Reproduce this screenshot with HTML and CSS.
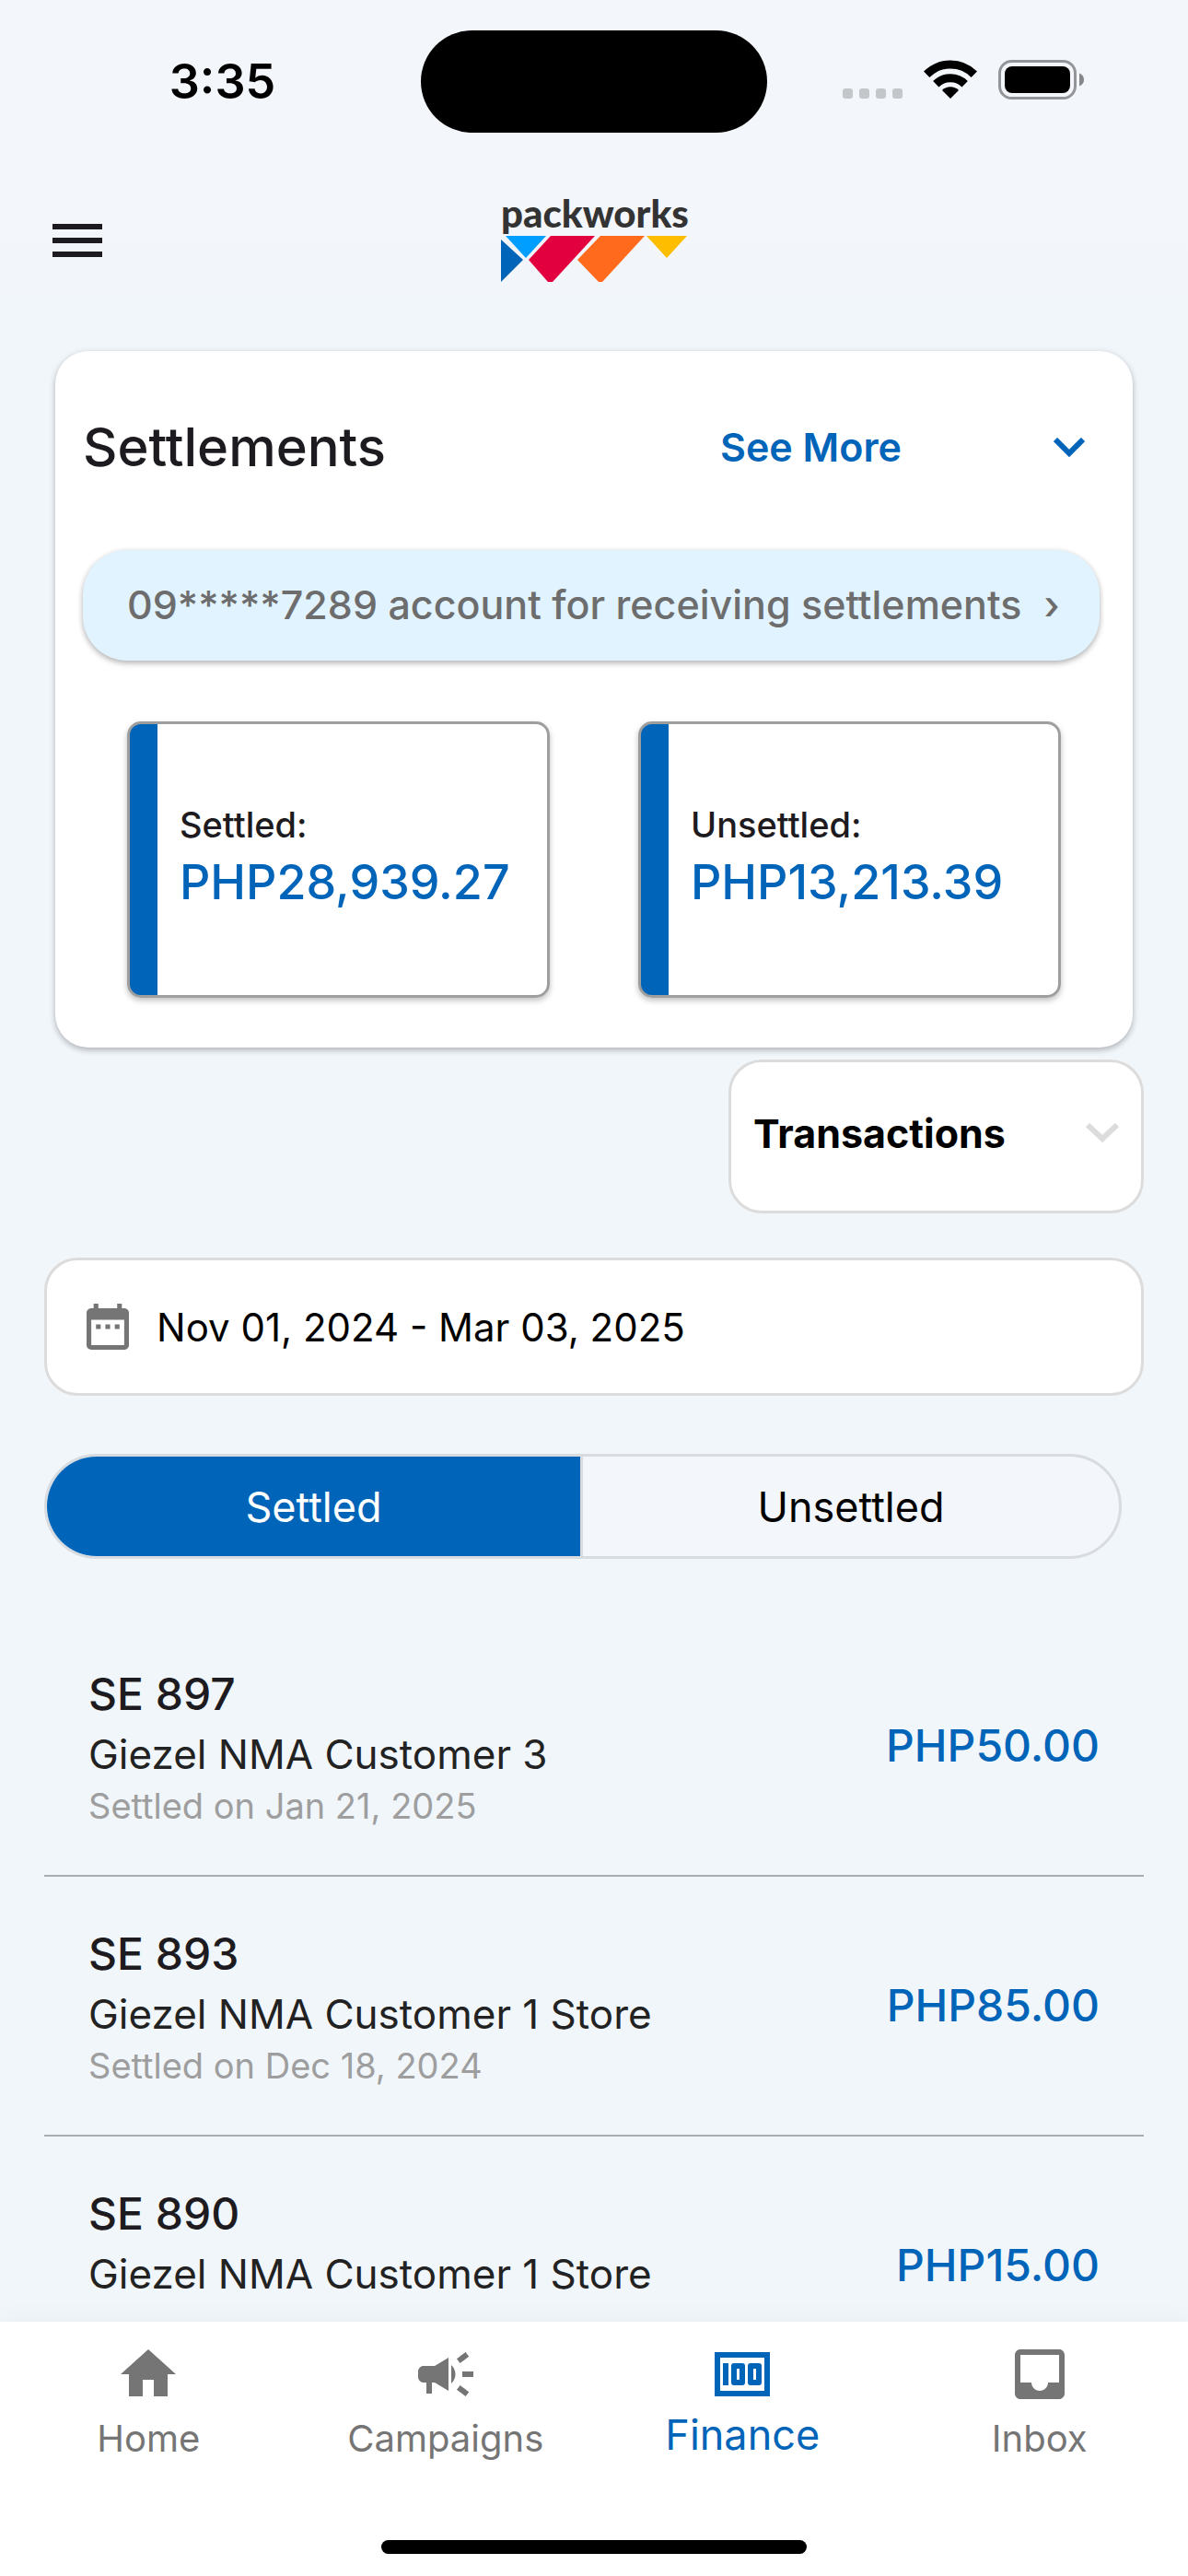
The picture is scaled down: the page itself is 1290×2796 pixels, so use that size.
FILE: index.html
```html
<!DOCTYPE html>
<html lang="en">
<head>
<meta charset="utf-8">
<meta name="viewport" content="width=device-width, initial-scale=1">
<title>Packworks – Finance</title>
<link rel="stylesheet" href="styles.css">
</head>
<body>
<div class="app">
  <header class="top">
    <div class="status">
      <span class="time">3:35</span>
      <span class="island"></span>
      <div class="indicators">
        <svg width="65" height="43" viewBox="0 0 65 43" fill="#c4c7ca" aria-hidden="true"><rect y="31" width="11" height="11" rx="3"/><rect x="18" y="31" width="11" height="11" rx="3"/><rect x="36" y="31" width="11" height="11" rx="3"/><rect x="54" y="31" width="11" height="11" rx="3"/></svg>
        <svg width="58" height="43" viewBox="0 0 58 43" aria-hidden="true"><g fill="none" stroke="#000" stroke-width="9"><path d="M3.2 15.8a36.500 36.500 0 0 1 51.600 0"/><path d="M13.300 26.300a22.300 22.300 0 0 1 31.400 0"/></g><path d="M29 42l-9-9a12.800 12.800 0 0 1 18 0z"/></svg>
        <svg width="93" height="43" viewBox="0 0 93 43" aria-hidden="true"><rect x="1.500" y="1.500" width="82" height="40" rx="13" fill="none" stroke="#949599" stroke-width="3"/><rect x="7" y="7" width="71" height="29" rx="8"/><path d="M88 14.500q5 2 5 7t-5 7z" fill="#86878a"/></svg>
      </div>
    </div>
    <div class="appbar">
      <button class="menu" aria-label="Menu"><svg width="54" height="36" viewBox="0 0 54 36" fill="#1d1b20"><path d="M0 0h54v6H0zM0 15h54v6H0zM0 30h54v6H0z"/></svg></button>
      <div class="logo">
        <span class="logo-name">packworks</span>
        <svg width="202" height="51" viewBox="0 0 202 51" aria-hidden="true"><path fill="#009eff" d="M5 1h44L27 25z"/><path fill="#0064b9" d="M0 5l24 22L0 51z"/><path fill="#e2003e" d="M54 1h48L56 51h-5L30 27z"/><path fill="#ff6a1c" d="M108 1h48l-46 50h-4L83 27z"/><path fill="#ffbd00" d="M158 1h44l-22 24z"/></svg>
      </div>
    </div>
  </header>

  <main class="content">
    <section class="card">
      <div class="card-head">
        <h1 class="card-title">Settlements</h1>
        <button class="see-more">See More
          <svg width="34" height="21" viewBox="0 0 34 21" fill="none" stroke="currentColor" stroke-width="6" aria-hidden="true"><path d="M2 2l15 15L32 2"/></svg>
        </button>
      </div>
      <button class="account"><span>09*****7289 account for receiving settlements</span><span>›</span></button>
      <div class="totals">
        <div class="total"><span class="total-label">Settled:</span><span class="total-amount">PHP28,939.27</span></div>
        <div class="total"><span class="total-label">Unsettled:</span><span class="total-amount">PHP13,213.39</span></div>
      </div>
    </section>

    <label class="picker">
      <select class="picker-select" aria-label="View"><option>Transactions</option></select>
      <svg class="picker-arrow" width="36" height="21" viewBox="0 0 36 21" fill="none" stroke="#dcdcdc" stroke-width="6" aria-hidden="true"><path d="M2 2l16 15L34 2"/></svg>
    </label>

    <button class="dates">
      <svg width="46" height="50" viewBox="3 2 18 20" preserveAspectRatio="none" fill="#757575" aria-hidden="true"><path d="M9 11H7v2h2v-2zm4 0h-2v2h2v-2zm4 0h-2v2h2v-2zm2-7h-1V2h-2v2H8V2H6v2H5c-1.110 0-1.990.9-1.990 2L3 20a2 2 0 0 0 2 2h14c1.100 0 2-.9 2-2V6c0-1.100-.9-2-2-2zm0 16H5V9h14v11z"/></svg>
      Nov 01, 2024 - Mar 03, 2025
    </button>

    <div class="toggle">
      <button class="toggle-item toggle-on" aria-pressed="true">Settled</button>
      <button class="toggle-item" aria-pressed="false">Unsettled</button>
    </div>

    <ul class="list">
      <li class="row"><div class="row-text"><span class="row-name">SE 897</span><span class="row-store">Giezel NMA Customer 3</span><span class="row-date">Settled on Jan 21, 2025</span></div><span class="row-amount">PHP50.00</span></li>
      <li class="row"><div class="row-text"><span class="row-name">SE 893</span><span class="row-store">Giezel NMA Customer 1 Store</span><span class="row-date">Settled on Dec 18, 2024</span></div><span class="row-amount">PHP85.00</span></li>
      <li class="row"><div class="row-text"><span class="row-name">SE 890</span><span class="row-store">Giezel NMA Customer 1 Store</span></div><span class="row-amount">PHP15.00</span></li>
    </ul>
  </main>

  <footer class="bottom">
    <nav class="tabs">
      <a class="tab" href="#home"><svg class="tab-icon" viewBox="0 0 24 24"><path d="M10 20v-6h4v6h5v-8h3L12 3 2 12h3v8z"/></svg>Home</a>
      <a class="tab" href="#campaigns"><svg class="tab-icon" viewBox="0 0 24 24"><path d="M18 11v2h4v-2h-4zM16 17.610c.96.710 2.210 1.650 3.200 2.390.4-.53.8-1.070 1.200-1.600-.99-.74-2.240-1.680-3.200-2.400-.4.540-.8 1.080-1.200 1.610zM20.400 5.600c-.4-.53-.8-1.070-1.200-1.600-.99.740-2.240 1.680-3.200 2.400.4.530.8 1.070 1.200 1.600.96-.72 2.210-1.650 3.200-2.400zM4 9c-1.100 0-2 .9-2 2v2c0 1.100.9 2 2 2h1v4h2v-4h1l5 3V6L8 9H4zM15.500 12c0-1.330-.58-2.530-1.500-3.350v6.690c.92-.81 1.500-2.010 1.500-3.340z"/></svg>Campaigns</a>
      <a class="tab tab-active" href="#finance" aria-current="page"><svg class="tab-icon" viewBox="0 0 24 24"><path fill-rule="evenodd" d="M5 8h2v8H5zM9 8h3a1 1 0 0 1 1 1v6a1 1 0 0 1-1 1H9a1 1 0 0 1-1-1V9a1 1 0 0 1 1-1zm1 2v4h1v-4zM15 8h3a1 1 0 0 1 1 1v6a1 1 0 0 1-1 1h-3a1 1 0 0 1-1-1V9a1 1 0 0 1 1-1zm1 2v4h1v-4zM2 4v16h20V4zm2 2h16v12H4z"/></svg>Finance</a>
      <a class="tab" href="#inbox"><svg class="tab-icon" viewBox="0 0 24 24"><path d="M19 3H5c-1.100 0-2 .9-2 2v14c0 1.100.9 2 2 2h14c1.100 0 2-.9 2-2V5c0-1.100-.9-2-2-2zm0 12h-4c0 1.660-1.340 3-3 3s-3-1.340-3-3H5V5h14v10z"/></svg>Inbox</a>
    </nav>
    <div class="home-bar"></div>
  </footer>
</div>
</body>
</html>
```
FILE: styles.css
```css
:root {
  --blue: #0064b9;
  --ink: #1d1b20;
  --grey: #757575;
  --line: #dcdcdc;
}

* { box-sizing: border-box; }

body {
  margin: 0;
  font-family: Inter, "Liberation Sans", sans-serif;
  font-size: 43px;
  color: #000;
  background: #f1f6fb;
}

button, select {
  margin: 0;
  padding: 0;
  border: 0;
  background: none;
  font: inherit;
  color: inherit;
}

svg { display: block; flex: none; }

.app {
  display: flex;
  flex-direction: column;
  height: 100vh;
}

/* Status bar and app bar */
.top { background: linear-gradient(#f3f6fb 70%, #f1f6fb); }

.status {
  display: grid;
  grid-template-columns: 1fr 376px 1fr;
  align-items: center;
  padding: 33px 0;
}

.time {
  padding-left: 26px;
  text-align: center;
  font-size: 52px;
  font-weight: 600;
  line-height: 64px;
}

.island {
  height: 111px;
  border-radius: 56px;
  background: #000;
}

.indicators {
  display: flex;
  justify-content: flex-end;
  gap: 23px;
  padding: 0 113px 4px 0;
}

.appbar {
  display: grid;
  grid-template-columns: 1fr auto 1fr;
  align-items: center;
  height: 168px;
  padding: 0 57px;
}

.menu { justify-self: start; }

.logo-name {
  display: block;
  margin-bottom: 9px;
  font: 900 42px/30px Lato, sans-serif;
  color: #333;
}

.logo { width: 202px; }

/* Main column */
.content {
  flex: 1;
  min-height: 0;
  overflow: hidden;
  display: flex;
  flex-direction: column;
  padding: 36px 48px 0;
}

.content > * { flex: none; }

.card {
  margin: 0 12px;
  padding: 72px 36px 54px 30px;
  border-radius: 36px;
  background: #fff;
  box-shadow: 0 3px 6px rgba(0, 0, 0, .22), 0 1px 9px rgba(0, 0, 0, .08);
}

.card-head {
  display: flex;
  justify-content: space-between;
  align-items: center;
  padding-right: 16px;
}

.card-title {
  margin: 0;
  font-size: 58px;
  font-weight: 500;
  line-height: 64px;
  color: var(--ink);
}

.see-more {
  display: flex;
  align-items: center;
  gap: 165px;
  font-weight: 600;
  color: var(--blue);
}

.account {
  display: flex;
  align-items: center;
  gap: 24px;
  width: 100%;
  height: 120px;
  margin-top: 80px;
  padding: 0 48px 2px;
  border-radius: 48px;
  background: #e1f3ff;
  color: #6d6d6d;
  font-weight: 500;
  white-space: nowrap;
  box-shadow: 0 3px 6px rgba(0, 0, 0, .25), 0 1px 6px rgba(0, 0, 0, .08);
}

.totals {
  display: grid;
  grid-template-columns: 1fr 1fr;
  gap: 96px;
  margin: 66px 42px 0 48px;
}

.total {
  display: flex;
  flex-direction: column;
  justify-content: center;
  height: 300px;
  padding: 0 0 4px 54px;
  border: 3px solid #9e9e9e;
  border-radius: 15px;
  background: linear-gradient(to right, var(--blue) 30px, #fff 30px);
  box-shadow: 0 3px 6px rgba(0, 0, 0, .25);
}

.total-label {
  font-size: 38px;
  font-weight: 500;
  line-height: 54px;
  color: var(--ink);
}

.total-amount {
  font-size: 52px;
  font-weight: 500;
  line-height: 72px;
  color: var(--blue);
}

.picker {
  display: grid;
  align-items: center;
  align-self: flex-end;
  width: 451px;
  height: 167px;
  margin-top: 13px;
  padding-bottom: 8px;
  border: 3px solid var(--line);
  border-radius: 36px;
  background: #fff;
}

.picker-select,
.picker-arrow { grid-area: 1 / 1; }

.picker-select {
  width: 100%;
  height: 100%;
  padding-left: 24px;
  appearance: none;
  font-weight: 700;
}

.picker-arrow {
  justify-self: end;
  margin-right: 24px;
  pointer-events: none;
}

.dates {
  display: flex;
  align-items: center;
  gap: 30px;
  height: 150px;
  margin-top: 48px;
  padding-left: 43px;
  border: 3px solid var(--line);
  border-radius: 36px;
  background: #fff;
  font-size: 42px;
}

.toggle {
  display: grid;
  grid-template-columns: 1fr 1fr;
  height: 114px;
  margin: 63px 24px 0 0;
  overflow: hidden;
  border: 3px solid #d8dbe0;
  border-radius: 57px;
  background: #f3f6fb;
  font-size: 45px;
}

.toggle-on {
  border-right: 3px solid #d8dbe0;
  background: var(--blue);
  background-clip: padding-box;
  color: #fff;
}

/* Settlement list */
.list {
  margin: 63px 0 0;
  padding: 0;
  list-style: none;
}

.row {
  display: flex;
  justify-content: space-between;
  align-items: center;
  height: 282px;
  padding: 0 48px;
  border-bottom: 2px solid #a9acb0;
}

.row-text {
  display: flex;
  flex-direction: column;
  min-height: 178px;
}

.row-name,
.row-amount {
  font-size: 48px;
  font-weight: 500;
  line-height: 66px;
  color: var(--ink);
}

.row-amount { color: var(--blue); }

.row-store {
  font-size: 44px;
  line-height: 64px;
  color: #222;
}

.row-date {
  font-size: 38px;
  line-height: 48px;
  color: #9e9e9e;
}

/* Tab bar */
.bottom {
  height: 276px;
  display: flex;
  flex-direction: column;
  justify-content: space-between;
  background: #fff;
  box-shadow: 0 -3px 24px rgba(0, 0, 0, .04);
}

.tabs {
  display: grid;
  grid-template-columns: repeat(4, 1fr);
  padding-top: 21px;
}

.tab {
  display: flex;
  flex-direction: column;
  align-items: center;
  gap: 10px;
  font-size: 40px;
  line-height: 48px;
  color: var(--grey);
  text-decoration: none;
}

.tab-active {
  font-size: 45px;
  line-height: 40px;
  color: var(--blue);
}

.tab-icon {
  width: 72px;
  height: 72px;
  fill: currentColor;
}

.home-bar {
  align-self: center;
  width: 462px;
  height: 15px;
  margin-bottom: 24px;
  border-radius: 8px;
  background: #000;
}
```
